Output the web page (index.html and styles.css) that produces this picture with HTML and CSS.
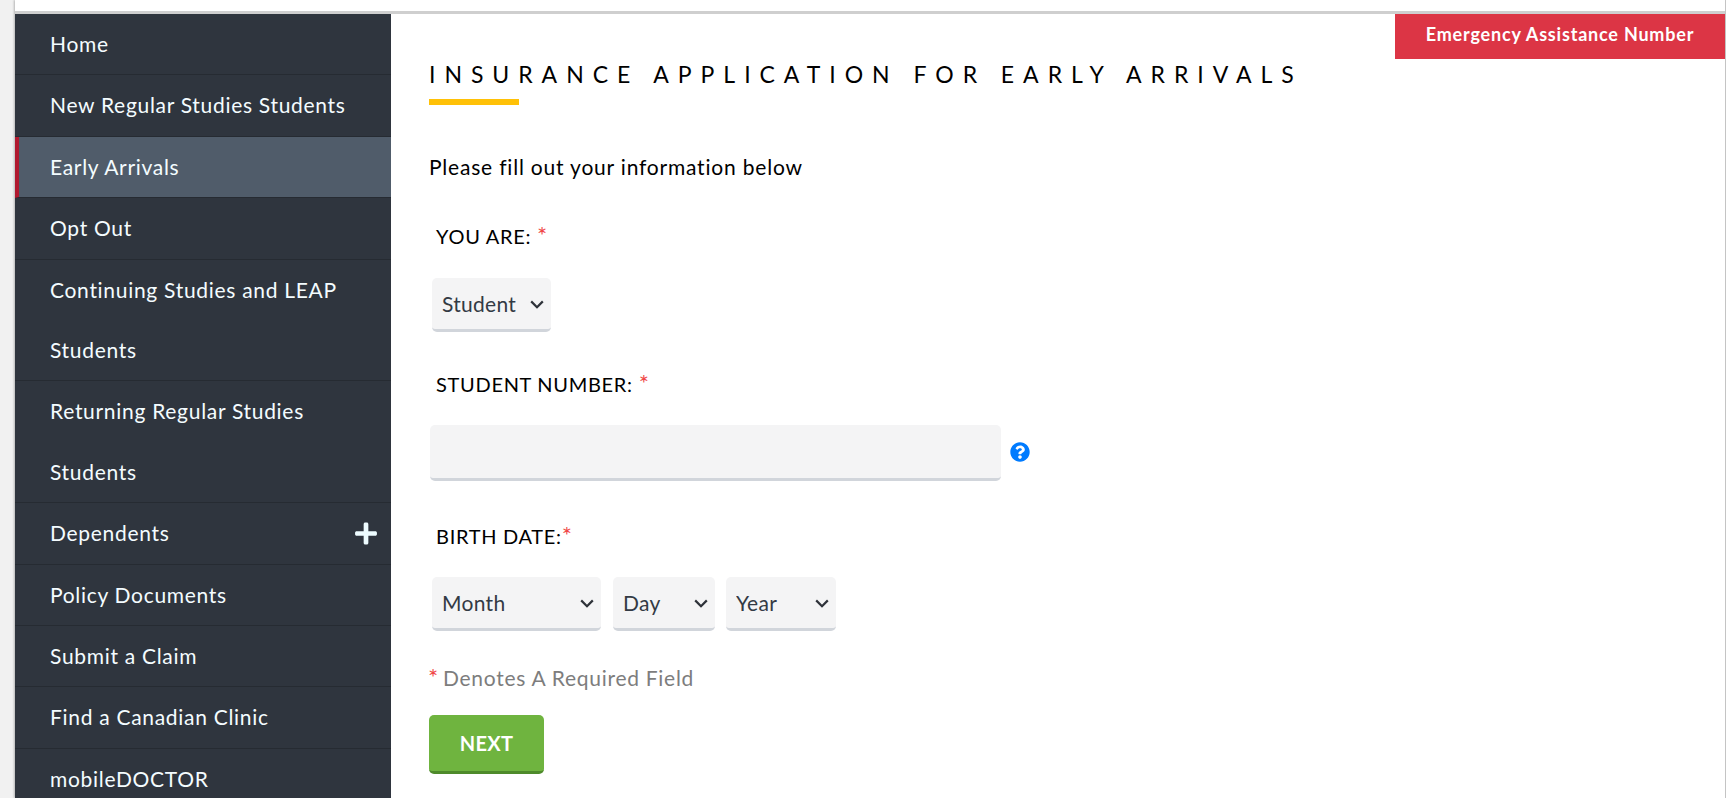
FILE: index.html
```html
<!DOCTYPE html>
<html lang="en">
<head>
<meta charset="utf-8">
<title>Insurance Application for Early Arrivals</title>
<link rel="stylesheet" href="styles.css">
</head>
<body>
<div class="shell">
  <div class="topbar"></div>
  <div class="layout">
    <nav class="sidebar">
      <a class="nav-item">Home</a>
      <a class="nav-item">New Regular Studies Students</a>
      <a class="nav-item active">Early Arrivals</a>
      <a class="nav-item">Opt Out</a>
      <a class="nav-item">Continuing Studies and LEAP Students</a>
      <a class="nav-item">Returning Regular Studies Students</a>
      <a class="nav-item has-icon">Dependents
        <svg class="plus" viewBox="0 0 448 512"><path d="M416 208H272V64c0-17.67-14.33-32-32-32h-32c-17.67 0-32 14.33-32 32v144H32c-17.67 0-32 14.33-32 32v32c0 17.67 14.33 32 32 32h144v144c0 17.67 14.33 32 32 32h32c17.67 0 32-14.33 32-32V304h144c17.67 0 32-14.33 32-32v-32c0-17.67-14.33-32-32-32z"/></svg>
      </a>
      <a class="nav-item">Policy Documents</a>
      <a class="nav-item">Submit a Claim</a>
      <a class="nav-item">Find a Canadian Clinic</a>
      <a class="nav-item">mobileDOCTOR</a>
    </nav>
    <main class="content">
      <a class="emergency">Emergency Assistance Number</a>
      <h1 class="title">INSURANCE APPLICATION FOR EARLY ARRIVALS</h1>
      <div class="title-bar"></div>
      <p class="intro">Please fill out your information below</p>
      <form class="form">
        <label class="label">YOU ARE: <span class="req">*</span></label>
        <select class="field select-type"><option>Student</option></select>
        <label class="label label-number">STUDENT NUMBER: <span class="req">*</span></label>
        <div class="number-row">
          <input class="field input-number" type="text">
          <svg class="help" viewBox="0 0 512 512"><path d="M504 256c0 136.997-111.043 248-248 248S8 392.997 8 256C8 119.083 119.043 8 256 8s248 111.083 248 248zM262.655 90c-54.497 0-89.255 22.957-116.549 63.758-3.536 5.286-2.353 12.415 2.715 16.258l34.699 26.31c5.205 3.947 12.621 3.008 16.665-2.122 17.864-22.658 30.113-35.797 57.303-35.797 20.429 0 45.698 13.148 45.698 32.958 0 14.976-12.363 22.667-32.534 33.976C247.128 238.528 216 254.941 216 296v4c0 6.627 5.373 12 12 12h56c6.627 0 12-5.373 12-12v-1.333c0-28.462 83.186-29.647 83.186-106.667 0-58.002-60.165-102-116.531-102zM256 338c-25.365 0-46 20.635-46 46 0 25.364 20.635 46 46 46s46-20.636 46-46c0-25.365-20.635-46-46-46z"/></svg>
        </div>
        <label class="label label-birth">BIRTH DATE:<span class="req">*</span></label>
        <div class="date-row">
          <select class="field select-month"><option>Month</option></select>
          <select class="field select-day"><option>Day</option></select>
          <select class="field select-year"><option>Year</option></select>
        </div>
        <p class="note"><span class="req-note">*</span> Denotes A Required Field</p>
        <button class="next" type="button">NEXT</button>
      </form>
    </main>
  </div>
</div>
</body>
</html>
```
FILE: styles.css
```css
* { box-sizing: border-box; }
html, body { height: 100%; margin: 0; overflow: hidden; }
body {
  background: #f1f1f1;
  font-family: "Lato", "Noto Sans", sans-serif;
  color: #000;
  padding: 0 1px 0 15px;
}
.shell {
  height: 100%;
  background: #fff;
  box-shadow: -1px 0 2px rgba(0,0,0,.25), 1px 0 0 #c8c8c8;
  display: flex;
  flex-direction: column;
}
.topbar {
  height: 14px;
  flex: none;
  border-bottom: 3px solid #cfcfcf;
}
.layout { display: flex; flex: 1; min-height: 0; }
.sidebar {
  width: 376px;
  flex: none;
  background: #2f353e;
  overflow: hidden;
}
.nav-item {
  display: block;
  padding: 0 40px 0 35px;
  font-size: 21px;
  line-height: 60.4px;
  letter-spacing: .7px;
  color: #f4fcff;
  border-bottom: 1px solid #262b32;
}
.nav-item.active {
  background: #505c6a;
  border-left: 4px solid #b0192f;
  padding-left: 31px;
}
.has-icon { display: flex; align-items: center; justify-content: space-between; padding-right: 14px; }
.plus { width: 22px; height: 25px; fill: #eefcff; }
.content {
  flex: 1;
  position: relative;
  padding: 0 0 0 38px;
}
.emergency {
  position: absolute;
  top: 0;
  right: 0;
  width: 330px;
  height: 45px;
  background: #dc3545;
  color: #fff;
  font-weight: 700;
  font-size: 18px;
  line-height: 41px;
  text-align: center;
  letter-spacing: .8px;
}
.title {
  margin: 45px 0 0;
  font-size: 23px;
  line-height: 30px;
  font-weight: 400;
  letter-spacing: 8.96px;
  white-space: nowrap;
}
.title-bar { width: 90px; height: 6px; background: #ffc107; margin-top: 10px; }
.intro {
  margin: 47px 0 0;
  font-size: 21px;
  line-height: 30px;
  letter-spacing: .8px;
}
.form { display: block; }
.label {
  display: block;
  margin: 39px 0 0 7px;
  font-size: 20px;
  line-height: 30px;
  letter-spacing: .7px;
}
.req { color: #f04747; font-size: 24px; line-height: 0; }
.field {
  display: block;
  border: 0;
  border-bottom: 3px solid #d1d5db;
  border-radius: 5px;
  background-color: #f4f4f5;
  font-family: inherit;
  font-size: 21px;
  letter-spacing: .3px;
  color: #333a44;
  padding: 0 0 0 10px;
  outline: none;
}
select.field {
  appearance: none;
  -webkit-appearance: none;
  background-image: url("data:image/svg+xml,%3Csvg xmlns='http://www.w3.org/2000/svg' width='14' height='9' viewBox='0 0 14 9'%3E%3Cpath d='M1.2 1.4 7 7.2l5.8-5.8' fill='none' stroke='%232f333a' stroke-width='2.2'/%3E%3C/svg%3E");
  background-repeat: no-repeat;
  background-position: right 7px top 22px;
  background-size: 14px 9px;
}
.select-type { margin: 27px 0 0 3px; width: 119px; height: 54px; }
.label-number { margin-top: 37px; }
.number-row { display: flex; align-items: center; margin-top: 26px; }
.input-number { width: 571px; height: 56px; margin-left: 1px; }
.help { width: 20px; height: 20px; margin-left: 9px; margin-top: -2px; fill: #007bff; }
.label-birth { margin-top: 40px; }
.date-row { display: flex; margin: 26px 0 0 3px; }
.select-month { width: 169px; height: 54px; }
.select-day { width: 102px; height: 54px; margin-left: 12px; }
.select-year { width: 110px; height: 54px; margin-left: 11px; }
.note {
  margin: 32px 0 0;
  font-size: 21px;
  line-height: 30px;
  letter-spacing: .72px;
  color: #7d7d7d;
}
.req-note { color: #f04747; font-size: 24px; line-height: 0; margin: 0 -2px 0 -1px; }
.next {
  display: block;
  width: 115px;
  height: 59px;
  margin-top: 22px;
  border: 0;
  border-bottom: 3px solid #4e8a2b;
  border-radius: 5px;
  background: #6fb43f;
  color: #fff;
  font-family: inherit;
  font-size: 20px;
  font-weight: 700;
  letter-spacing: .3px;
}
```
